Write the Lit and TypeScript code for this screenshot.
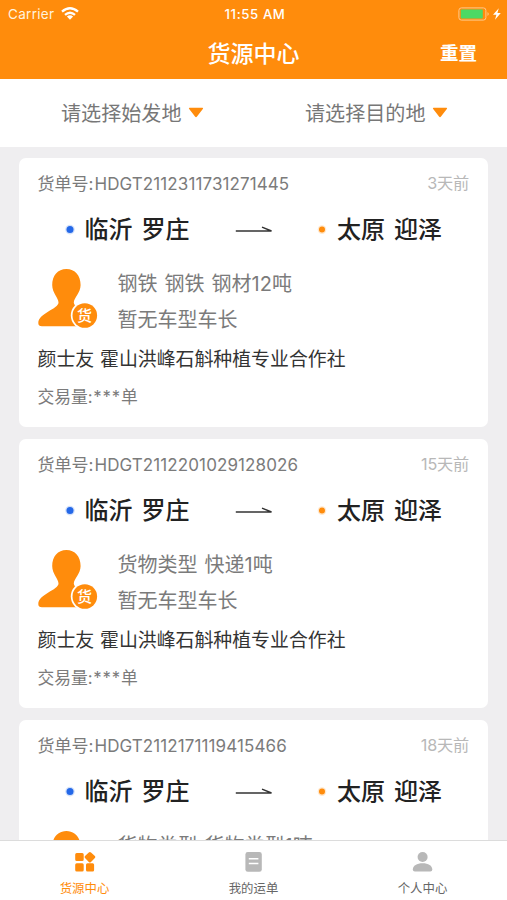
import { LitElement, html, css, svg } from "lit";
import { customElement, property } from "lit/decorators.js";

interface Cargo {
  no: string;
  age: string;
  goods: string;
}

const CARGOS: Cargo[] = [
  { no: "HDGT2112311731271445", age: "3天前", goods: "钢铁 钢铁 钢材12吨" },
  { no: "HDGT2112201029128026", age: "15天前", goods: "货物类型 快递1吨" },
  { no: "HDGT2112171119415466", age: "18天前", goods: "货物类型 货物类型1吨" },
];

@customElement("cargo-card")
export class CargoCard extends LitElement {
  @property({ attribute: false }) cargo!: Cargo;

  static styles = css`
    :host {
      display: block;
      box-sizing: border-box;
      height: 269px;
      flex: none;
      padding: 12px 19px 0 18.5px;
      border-radius: 7px;
      background: #fff;
      color: #7b7b7b;
      white-space: nowrap;
    }
    .top {
      display: flex;
      justify-content: space-between;
      height: 26px;
      line-height: 28px;
      font-size: 17px;
    }
    .code { margin-left: 1px; font-size: 17px; letter-spacing: 0.1px; }
    .age { color: #b8b8b8; font-size: 16.2px; letter-spacing: -0.2px; line-height: 27px; }
    .route {
      display: flex;
      align-items: center;
      height: 36px;
      margin-top: 16px;
      padding-left: 26px;
      color: #222;
      font-size: 24px;
      font-weight: 500;
      line-height: 32px;
      word-spacing: 2.6px;
    }
    .dot { width: 12px; height: 12px; flex: none; margin-right: 9px; }
    .from { width: 150px; }
    .arrow { width: 38px; height: 12px; flex: none; margin-right: 43.5px; }
    .body { display: flex; margin-top: 17px; height: 72px; }
    .avatar { width: 80px; height: 62px; flex: none; margin-top: 3px; }
    .mark { font-size: 15px; font-weight: 500; }
    .lines { margin-top: 1px; font-size: 20px; line-height: 36px; word-spacing: 1.4px; }
    .owner {
      margin-top: 7px;
      line-height: 32px;
      font-size: 18.9px;
      color: #333;
      word-spacing: 0.5px;
    }
    .deals { margin-top: 5px; line-height: 32px; font-size: 16.8px; }
    .stars { letter-spacing: 0.9px; margin-left: 0.5px; }
  `;

  private dot(color: string, r: number) {
    return html`<svg class="dot" viewBox="0 0 12 12">
      <circle cx="6" cy="5.6" r=${r + 1.3} fill=${color} opacity=".2"></circle>
      <circle cx="6" cy="5.6" r=${r} fill=${color}></circle>
    </svg>`;
  }

  render() {
    const c = this.cargo;
    return html`
      <div class="top">
        <span>货单号:<span class="code">${c.no}</span></span>
        <span class="age">${c.age}</span>
      </div>
      <div class="route">
        ${this.dot("#2468e8", 3.5)}
        <span class="from">临沂 罗庄</span>
        <svg class="arrow" viewBox="0 0 38 12">
          <path d="M.8 7H36.5L27 3.1" fill="none" stroke="#333" stroke-width="1.4" stroke-linejoin="bevel"></path>
        </svg>
        ${this.dot("#ff8c0c", 3)}
        <span>太原 迎泽</span>
      </div>
      <div class="body">
        <svg class="avatar" viewBox="0 0 80 62">
          <path fill="#ff8c0c" d="M28.4 1C19.8 1 14.2 7.7 14.2 17C14.2 25 20.5 29.8 20.5 34.5C20.5 41 .3 45.2.3 55Q.3 58.2 4 58.2H52V43C44 41 35.8 39 35.8 34.5C35.8 29.8 42.6 25 42.6 17C42.6 7.7 37 1 28.4 1Z"></path>
          <circle cx="46.8" cy="47.5" r="14" fill="#fff"></circle>
          <circle cx="46.8" cy="47.5" r="12.3" fill="#ff8c0c"></circle>
          <text class="mark" x="46.6" y="53" text-anchor="middle" fill="#fff">货</text>
        </svg>
        <div class="lines">
          <div>${c.goods}</div>
          <div>暂无车型车长</div>
        </div>
      </div>
      <div class="owner">颜士友 霍山洪峰石斛种植专业合作社</div>
      <div class="deals">交易量:<span class="stars">***</span>单</div>
    `;
  }
}

@customElement("app-root")
export class AppRoot extends LitElement {
  static styles = css`
    :host {
      display: flex;
      flex-direction: column;
      width: 507px;
      height: 900px;
      overflow: hidden;
      background: #efeef0;
      font-family: Inter, "Noto Sans CJK SC", sans-serif;
      font-weight: 400;
    }
    .header { height: 79px; flex: none; background: #ff8c0c; color: #fff; }
    .status, .nav {
      display: grid;
      grid-template-columns: 1fr auto 1fr;
      align-items: center;
    }
    .status { height: 27px; font-size: 13.5px; padding: 0 5px 0 8px; }
    .carrier { display: flex; align-items: center; gap: 7px; letter-spacing: 0.3px; color: #fff3df; }
    .wifi { width: 18px; height: 13px; }
    .clock { font-weight: 500; font-size: 13.2px; letter-spacing: 0.6px; }
    .battery { width: 44px; height: 14px; justify-self: end; }
    .nav { height: 50px; }
    .title { grid-column: 2; font-size: 23px; font-weight: 500; }
    .reset { justify-self: end; margin-right: 30px; font-size: 18.5px; font-weight: 700; }
    .filters { display: flex; height: 68px; flex: none; background: #fff; color: #777; font-size: 20.1px; }
    .filter { display: flex; align-items: center; gap: 6px; width: 244px; padding: 0 0 2px 61px; box-sizing: border-box; }
    .caret { width: 16px; height: 11px; }
    .list {
      display: flex;
      flex-direction: column;
      gap: 12px;
      flex: 1;
      min-height: 0;
      overflow: hidden;
      padding: 11px 19px 0;
    }
    .tabs {
      display: flex;
      height: 60px;
      flex: none;
      box-sizing: border-box;
      border-top: 1px solid #dcdcdc;
      background: #fff;
    }
    .tab {
      flex: 1;
      display: flex;
      flex-direction: column;
      align-items: center;
      padding-top: 10px;
      gap: 6px;
      color: #666;
      font-size: 12.4px;
      line-height: 20px;
    }
    .tab.on { color: #ff8c0c; }
    .icon { width: 22px; height: 22px; color: #b8b8b8; }
    .on .icon { color: #ff8c0c; }
  `;

  private caret = html`<svg class="caret" viewBox="0 0 16 11">
    <path d="M1.8.8H14.2Q15.8.8 14.8 2L9 9.5Q8 10.8 7 9.5L1.2 2Q.2.8 1.8.8Z" fill="#ff8c0c"></path>
  </svg>`;

  private tabs = [
    {
      label: "货源中心",
      icon: svg`<path d="M2.7 2H8.2Q9.7 2 9.7 3.5V8.5Q9.7 10 8.2 10H2.7Q1.2 10 1.2 8.5V3.5Q1.2 2 2.7 2ZM2.7 12.2H8.2Q9.7 12.2 9.7 13.7V18.9Q9.7 20.4 8.2 20.4H2.7Q1.2 20.4 1.2 18.9V13.7Q1.2 12.2 2.7 12.2ZM13.5 12.2H18.6Q20.1 12.2 20.1 13.7V18.9Q20.1 20.4 18.6 20.4H13.5Q12 20.4 12 18.9V13.7Q12 12.2 13.5 12.2ZM14.8 1.5Q15.9.4 17 1.5L20.9 5.1Q21.9 6.1 20.9 7.1L17 10.9Q15.9 11.9 14.8 10.9L11 7.1Q10 6.1 11 5.1Z"/>`,
    },
    {
      label: "我的运单",
      icon: svg`<rect x="2.4" y="1" width="16.4" height="19.8" rx="2.4"/><path d="M5.8 7.8H15.4M5.8 12.4H15.4" stroke="#fff" stroke-width="1.5"/>`,
    },
    {
      label: "个人中心",
      icon: svg`<circle cx="10.6" cy="6" r="5"/><path d="M.8 18.6C.8 14.6 4.9 12.2 10.6 12.2S20.3 14.6 20.3 18.6Q20.3 20.6 18.3 20.6H2.8Q.8 20.6.8 18.6Z"/>`,
    },
  ];

  render() {
    return html`
      <div class="header">
        <div class="status">
          <span class="carrier">Carrier
            <svg class="wifi" viewBox="0 0 18 13">
              <g fill="none" stroke="#fff" stroke-width="2.3">
                <path d="M1 4.7Q9-2.2 17 4.7"></path>
                <path d="M4 7.9Q9 3.5 14 7.9"></path>
              </g>
              <path d="M5.9 9.5Q9 7 12.1 9.5L9 12.7Z" fill="#fff"></path>
            </svg>
          </span>
          <span class="clock">11:55 AM</span>
          <svg class="battery" viewBox="0 0 44 14">
            <rect x=".9" y=".9" width="27" height="12.2" rx="2.5" fill="none" stroke="#ffc98a"></rect>
            <rect x="2.8" y="2.6" width="22" height="8.8" rx="1" fill="#4cd964"></rect>
            <path d="M29.5 5Q32 7 29.5 9Z" fill="#ffc98a"></path>
            <path d="M40.8 1.2L35 7.8H38.4L37 12.8L42.8 6H39.4Z" fill="#fff"></path>
          </svg>
        </div>
        <div class="nav">
          <span class="title">货源中心</span>
          <span class="reset">重置</span>
        </div>
      </div>
      <div class="filters">
        <div class="filter"><span>请选择始发地</span>${this.caret}</div>
        <div class="filter"><span>请选择目的地</span>${this.caret}</div>
      </div>
      <div class="list">
        ${CARGOS.map((c) => html`<cargo-card .cargo=${c}></cargo-card>`)}
      </div>
      <div class="tabs">
        ${this.tabs.map(
          (t, i) => html`<div class="tab ${i === 0 ? "on" : ""}">
            <svg class="icon" viewBox="0 0 22 22" fill="currentColor">${t.icon}</svg>
            <span>${t.label}</span>
          </div>`
        )}
      </div>
    `;
  }
}
